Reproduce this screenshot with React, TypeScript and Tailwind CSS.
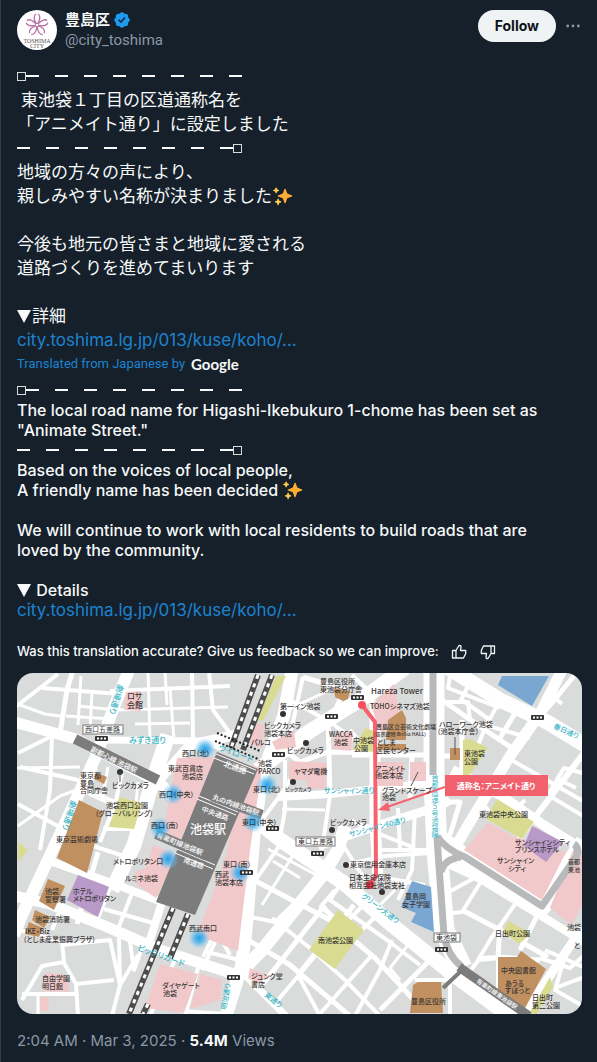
import React from "react";

const JP = '"Noto Sans CJK JP", sans-serif';

type Road = [string, number];

const roads: Road[] = [
  // main streets
  ["M14 722L76 739L160 783L175 800", 11],
  ["M129 670L112 712L96 756L62 830L22 915L14 935", 12],
  ["M105 740L205 741L222 748", 7],
  ["M168 735L150 790L134 845L112 890", 15],
  ["M150 790L190 745L235 735", 10],
  ["M50 861L117 885L162 902L150 940", 8],
  ["M14 896L50 904L105 926L160 950L240 976", 11],
  ["M292 670L284 715L262 775L254 835L246 930L241 968L226 1016", 13],
  ["M243 970L262 950L322 876L338 850L345 826", 13],
  ["M262 825L282 841L322 868L345 884L392 925L450 972L515 1020", 15],
  ["M258 770L310 731L368 695L405 668", 15],
  ["M442 664L500 700L547 722L590 748", 15],
  ["M318 846L370 828L440 806L450 800", 9],
  ["M278 797L330 794L440 782", 8],
  ["M375 700L375 820L378 880", 11],
  ["M434 670L434 780L437 850L444 930L462 968", 21],
  ["M563 668L541 712L510 756L470 822L443 868", 11],
  ["M452 770L500 795L545 826L590 854", 10],
  ["M437 837L458 853L542 906L585 842", 19],
  ["M444 862L482 880L548 920L590 946", 8],
  ["M582 928L555 968L520 1020", 9],
  ["M240 970L290 1020", 7],
  // side streets, north-west
  ["M14 708L58 674", 4], ["M20 705L45 714L60 716", 3], ["M42 688L120 694", 4], ["M73 670L67 690L60 733", 5],
  ["M81 676L78 725", 3], ["M92 692L90 730", 3], ["M78 706L116 710", 3], ["M66 716L112 719", 3],
  ["M110 691L230 686", 4], ["M115 710L228 707", 3], ["M148 670L150 740", 3], ["M165 672L167 705", 3],
  ["M170 688L174 740", 3], ["M192 672L193 738", 4], ["M209 672L213 710L235 740", 4], ["M135 724L190 723", 3],
  ["M52 735L50 790L40 850", 4], ["M18 753L52 736", 4], ["M14 768L80 767", 3], ["M20 767L78 780", 4],
  ["M18 804L72 834", 4], ["M18 826L60 796L82 788", 3], ["M96 768L88 790L124 806", 4], ["M108 767L102 800", 3],
  ["M122 773L115 805L100 842", 4], ["M80 790L108 803", 3], ["M138 782L134 828", 3], ["M103 829L145 829", 4],
  ["M90 845L130 858", 4], ["M98 852L84 900L77 924", 5],
  // side streets, south-west
  ["M110 888L98 918", 4], ["M132 893L116 934", 4], ["M104 909L153 923", 4], ["M62 905L52 930", 4],
  ["M20 930L62 942L64 962L42 966L22 1000", 4], ["M62 945L110 940L120 985L112 1016", 4],
  ["M64 963L76 984L114 980", 4], ["M76 984L78 1016", 4], ["M22 994L76 994", 4], ["M38 994L38 1016", 3],
  ["M119 938L120 982", 4], ["M130 942L134 970L142 948", 4], ["M120 985L138 955", 4], ["M175 960L150 1016", 4],
  ["M198 968L185 1016", 4], ["M180 1011L226 1014", 4],
  // around the station
  ["M203 957L216 930L230 955", 4], ["M207 952L244 961", 4], ["M216 940L202 970", 4],
  ["M250 878L330 920L375 958L425 1012", 5], ["M250 917L275 922L300 898", 4], ["M262 828L312 864", 3],
  ["M282 842L252 885", 4], ["M295 852L262 905", 3], ["M268 849L318 876", 3], ["M273 861L300 878", 3],
  ["M248 940L290 965L350 1016", 5], ["M272 918L310 948L345 980L380 1016", 4], ["M325 905L262 985", 5],
  ["M335 890L322 905L340 926L278 1000", 4], ["M354 905L298 975", 5], ["M298 975L320 1016", 4],
  ["M320 905L345 928", 5], ["M372 955L318 1016", 4], ["M340 885L330 900L387 940L420 965", 4],
  ["M382 910L362 930", 4], ["M372 896L345 924", 4],
  // north centre
  ["M303 677L345 690L330 720", 5], ["M290 700L330 722L355 740", 4], ["M303 677L290 735", 4],
  ["M330 690L282 712", 3], ["M352 675L370 692", 4], ["M284 750L300 762L328 752L375 753", 5],
  ["M328 720L330 795", 5], ["M300 762L284 790L262 820", 4], ["M285 760L285 810L280 838", 4],
  ["M330 795L322 850", 4], ["M282 809L325 810", 3], ["M350 730L375 760", 4], ["M352 755L430 755", 5],
  ["M340 840L365 880", 4], ["M350 820L382 835L415 848", 4], ["M345 865L385 856L430 853", 4],
  ["M378 850L430 850", 4], ["M415 810L412 870L398 900", 4], ["M398 808L400 850", 4],
  ["M385 878L425 885", 4], ["M395 890L380 905", 3], ["M412 755L410 800", 5],
  // north east
  ["M450 676L448 688L500 708", 4], ["M470 682L460 702", 4], ["M462 700L490 720", 4], ["M440 702L468 702L470 720", 4],
  ["M442 700L485 730L515 750", 5], ["M500 700L485 728L470 765", 4], ["M462 720L462 770", 5],
  ["M517 710L500 738", 5], ["M485 725L530 738", 4], ["M532 720L515 748", 4], ["M440 756L464 756", 5],
  ["M574 676L546 710", 5], ["M548 692L562 704", 4], ["M590 745L510 850", 6], ["M560 675L552 705", 3],
  ["M508 758L590 805", 4], ["M590 775L564 768L548 795L590 820", 4], ["M556 778L576 788", 4],
  ["M525 800L500 825", 4], ["M480 800L500 825", 4], ["M442 802L460 802L450 835", 5],
  // south east
  ["M482 880L462 912L445 914", 4], ["M447 893L478 876", 4], ["M518 900L490 940L478 960L500 958", 4],
  ["M462 910L500 930L548 957", 5], ["M540 910L520 950", 5], ["M500 925L498 957L540 960", 5],
  ["M498 960L498 1016", 4], ["M500 957L480 958L465 978", 4], ["M540 958L570 968L590 950", 4],
  ["M565 956L555 990L590 1010", 4], ["M555 988L590 975", 4], ["M545 950L590 970", 4],
  ["M392 940L380 970L355 1016", 4], ["M430 960L380 1010", 5], ["M408 945L390 968L400 980", 3],
  ["M415 980L450 980L450 1016", 4], ["M450 975L450 1016", 3],
];

type Area = [string, string];
const PINK = "#f2c9ca";
const BROWN = "#c09060";
const GREEN = "#d9dc90";
const PURPLE = "#b899c8";
const BLUE = "#7aa7d2";

const areas: Area[] = [
  ["126,692 140,691 141,711 124,710", PINK],
  ["177,758 215,757 196,806 180,840 163,833", PINK],
  ["153,845 178,855 156,898 137,885 135,872 146,868", PINK],
  ["255,722 264,725 262,748 250,744", PINK],
  ["248,765 262,768 250,850 238,951 197,935 222,870", PINK],
  ["289,761 327,763 325,789 307,788 307,780 289,780", PINK],
  ["272,742 294,730 296,747 276,750", PINK],
  ["336,733 353,731 351,751 333,749", PINK],
  ["371,705 394,684 400,716 382,734 376,720", PINK],
  ["378,762 404,762 403,786 378,786", PINK],
  ["410,762 426,762 426,781 410,781", PINK],
  ["488,822 512,836 566,852 542,900 464,850", PINK],
  ["575,845 582,850 582,905 572,925 550,908", PINK],
  ["160,964 198,974 184,1013 145,1008", PINK],
  ["201,974 222,980 220,1000 190,1009", PINK],
  ["250,968 268,976 257,984 248,978", PINK],
  ["46,972 68,976 69,992 44,991", PINK],
  ["40,997 49,997 48,1011 40,1011", PINK],
  ["79,800 103,812 87,873 57,858", BROWN],
  ["97,773 107,777 104,784 94,779", BROWN],
  ["48,879 65,886 54,910 39,901", BROWN],
  ["35,910 50,917 44,928 32,920", BROWN],
  ["29,922 43,928 39,937 25,934", BROWN],
  ["334,688 350,691 348,699 343,701 335,697", BROWN],
  ["388,720 402,710 406,718 406,740 386,740", BROWN],
  ["378,744 406,744 406,750 378,750", BROWN],
  ["450,748 460,748 460,760 450,760", BROWN],
  ["498,957 517,957 521,951 546,969 524,1010 498,994", BROWN],
  ["413,985 418,982 441,982 443,1013 410,1013", BROWN],
  ["120,797 142,803 134,829 109,827", GREEN],
  ["276,676 286,676 263,721 257,720", GREEN],
  ["365,728 374,731 374,752 353,750", GREEN],
  ["463,740 470,739 488,748 467,779 463,776", GREEN],
  ["497,799 534,822 522,839 486,819", GREEN],
  ["338,910 364,930 335,969 309,950", GREEN],
  ["509,921 531,934 519,944 502,932", GREEN],
  ["550,977 553,987 537,1014 529,1014", GREEN],
  ["18,842 28,850 18,862", GREEN],
  ["78,875 109,887 98,917 67,900", PURPLE],
  ["532,826 563,842 546,862 524,846", PURPLE],
  ["502,676 549,676 532,706 498,685", BLUE],
  ["412,881 431,887 434,932 411,922 416,913 401,907", BLUE],
];

type Label = { t: string; x: number; y: number; s?: number; c?: string; r?: number };
const TEAL = "#3ab4c4";

const labels: Label[] = [
  { t: "劇場通り", x: 118, y: 684, r: 107, c: TEAL },
  { t: "劇場通り", x: 71, y: 800, r: 107, c: TEAL },
  { t: "ロサ", x: 127, y: 699 },
  { t: "会館", x: 127, y: 708 },
  { t: "みずき通り", x: 129, y: 743, c: TEAL },
  { t: "東京都", x: 80, y: 778, s: 7 },
  { t: "豊島", x: 80, y: 786, s: 7 },
  { t: "合同庁舎", x: 80, y: 793, s: 7 },
  { t: "ビックカメラ", x: 112, y: 788, s: 7 },
  { t: "池袋西口公園", x: 106, y: 808, s: 7 },
  { t: "（グローバルリング）", x: 95, y: 816, s: 7 },
  { t: "東京芸術劇場", x: 56, y: 842, s: 7 },
  { t: "西口（北）", x: 182, y: 756, s: 7 },
  { t: "東武百貨店", x: 168, y: 771, s: 7 },
  { t: "池袋店", x: 182, y: 779, s: 7 },
  { t: "西口（中央）", x: 159, y: 797, s: 7 },
  { t: "西口（南）", x: 151, y: 828, s: 7 },
  { t: "メトロポリタン口", x: 113, y: 864, s: 7 },
  { t: "ルミネ池袋", x: 125, y: 881, s: 7 },
  { t: "池袋", x: 45, y: 894, s: 7 },
  { t: "警察署", x: 45, y: 902, s: 7 },
  { t: "ホテル", x: 73, y: 894, s: 7 },
  { t: "メトロポリタン", x: 73, y: 901, s: 7 },
  { t: "池袋消防署", x: 35, y: 922, s: 7 },
  { t: "IKE・Biz", x: 25, y: 934, s: 7 },
  { t: "（としま産業振興プラザ）", x: 23, y: 942, s: 7 },
  { t: "自由学園", x: 42, y: 981, s: 7 },
  { t: "明日館", x: 42, y: 989, s: 7 },
  { t: "ビックリガード", x: 137, y: 950, r: 20, c: TEAL },
  { t: "ダイヤゲート", x: 162, y: 988, s: 7 },
  { t: "池袋", x: 163, y: 996, s: 7 },
  { t: "西武南口", x: 189, y: 931, s: 7 },
  { t: "明治通り", x: 226, y: 1010, r: -80, c: TEAL, s: 7 },
  { t: "東通り", x: 264, y: 996, r: 38, c: TEAL, s: 7 },
  { t: "ジュンク堂", x: 251, y: 979, s: 7 },
  { t: "書店", x: 251, y: 987, s: 7 },
  { t: "豊島区役所", x: 320, y: 684, s: 7 },
  { t: "東池袋分庁舎", x: 320, y: 692, s: 7 },
  { t: "第一イン池袋", x: 280, y: 709, s: 7 },
  { t: "ビックカメラ", x: 264, y: 728, s: 7 },
  { t: "池袋本店", x: 264, y: 736, s: 7 },
  { t: "ビックカメラ", x: 287, y: 753, s: 7 },
  { t: "パルコ", x: 251, y: 745, s: 7 },
  { t: "池袋", x: 258, y: 766, s: 7 },
  { t: "PARCO", x: 258, y: 774, s: 7 },
  { t: "ヤマダ電機", x: 294, y: 774, s: 7 },
  { t: "ビックカメラ", x: 285, y: 791, s: 5 },
  { t: "東口（北）", x: 253, y: 792, s: 7 },
  { t: "東口（中央）", x: 242, y: 825, s: 7 },
  { t: "東口（南）", x: 223, y: 867, s: 7 },
  { t: "西武", x: 215, y: 877, s: 7 },
  { t: "池袋本店", x: 215, y: 885, s: 7 },
  { t: "サンシャイン通り", x: 324, y: 793, s: 7, c: TEAL },
  { t: "サンシャイン60通り", x: 350, y: 837, s: 7, c: TEAL, r: -15 },
  { t: "WACCA", x: 329, y: 737, s: 7 },
  { t: "池袋", x: 334, y: 745, s: 7 },
  { t: "中池袋", x: 353, y: 743, s: 7 },
  { t: "公園", x: 354, y: 751, s: 7 },
  { t: "Hareza Tower", x: 371, y: 694, s: 8 },
  { t: "TOHOシネマズ池袋", x: 370, y: 709, s: 7 },
  { t: "豊島区立芸術文化劇場", x: 376, y: 729, s: 6 },
  { t: "（東京建物 Brillia HALL）", x: 373, y: 736, s: 5 },
  { t: "としま", x: 377, y: 745, s: 7 },
  { t: "区民センター", x: 376, y: 753, s: 7 },
  { t: "アニメイト", x: 375, y: 771, s: 7 },
  { t: "池袋本店", x: 375, y: 778, s: 7 },
  { t: "グランドスケープ", x: 382, y: 793, s: 7 },
  { t: "池袋", x: 382, y: 800, s: 7 },
  { t: "ビックカメラ", x: 330, y: 825, s: 7 },
  { t: "東京信用金庫本店", x: 350, y: 867, s: 7 },
  { t: "日本生命保険", x: 349, y: 880, s: 7 },
  { t: "相互会社池袋支社", x: 349, y: 888, s: 7 },
  { t: "グリーン大通り", x: 361, y: 897, r: 37, c: TEAL, s: 7 },
  { t: "南池袋公園", x: 318, y: 943, s: 7 },
  { t: "ハローワーク池袋", x: 439, y: 727, s: 7 },
  { t: "（池袋本庁舎）", x: 437, y: 734, s: 7 },
  { t: "東池袋", x: 464, y: 756, s: 7 },
  { t: "公園", x: 464, y: 764, s: 7 },
  { t: "春日通り", x: 553, y: 728, r: 24, c: TEAL, s: 7 },
  { t: "東池袋中央公園", x: 479, y: 817, s: 7 },
  { t: "サンシャインシティ", x: 515, y: 845, s: 7 },
  { t: "プリンスホテル", x: 515, y: 852, s: 7 },
  { t: "サンシャイン", x: 497, y: 863, s: 7 },
  { t: "シティ", x: 508, y: 871, s: 7 },
  { t: "首都", x: 568, y: 864, s: 6 },
  { t: "東池", x: 568, y: 872, s: 6 },
  { t: "池袋", x: 567, y: 930, s: 7 },
  { t: "と", x: 574, y: 948, s: 7 },
  { t: "豊島岡", x: 405, y: 899, s: 7 },
  { t: "女子学園", x: 402, y: 907, s: 7 },
  { t: "日出町公園", x: 495, y: 936, s: 7 },
  { t: "中央図書館", x: 501, y: 973, s: 7 },
  { t: "あうる", x: 505, y: 986, s: 7 },
  { t: "すぽっと", x: 505, y: 993, s: 7 },
  { t: "日出町", x: 532, y: 1000, s: 7 },
  { t: "第二公園", x: 532, y: 1008, s: 7 },
  { t: "豊島区役所", x: 411, y: 1004, s: 7 },
  { t: "北通路", x: 223, y: 766, c: "#fff", r: 20 },
  { t: "中央通路", x: 201, y: 811, c: "#fff", r: 20, s: 7 },
  { t: "南通路", x: 183, y: 862, c: "#fff", r: 20, s: 7 },
  { t: "池袋駅", x: 190, y: 834, c: "#fff", s: 12 },
  { t: "ウイロード", x: 218, y: 750, c: TEAL, r: 20 },
];

const signals: [number, number][] = [
  [95, 736], [351, 695], [325, 714], [272, 752], [266, 826], [311, 851], [240, 870], [227, 975], [531, 715], [435, 947],
];
const dots: [number, number][] = [
  [120, 772], [283, 714], [306, 743], [293, 782], [332, 830], [346, 865], [382, 892],
];
const glows: [number, number][] = [
  [205, 749], [173, 794], [160, 828], [168, 859], [267, 785], [253, 822], [240, 873], [199, 938],
];

function StreetMap() {
  return (
    <svg viewBox="17 673 565 341" className="block w-full rounded-2xl" role="img" aria-label="池袋駅周辺の地図" fontFamily={JP}>
      <defs>
        <radialGradient id="glow">
          <stop offset="0" stopColor="#1e9fe8" />
          <stop offset="0.45" stopColor="#45b0ec" stopOpacity="0.75" />
          <stop offset="1" stopColor="#7cc9f2" stopOpacity="0" />
        </radialGradient>
      </defs>
      <rect x="17" y="673" width="565" height="341" fill="#dadcdc" />
      <g fill="none" stroke="#fff" strokeLinejoin="round">
        {roads.map(([d, w], i) => (
          <path key={i} d={d} strokeWidth={w} />
        ))}
      </g>
      {areas.map(([p, c], i) => (
        <polygon key={i} points={p} fill={c} />
      ))}
      {/* expressway */}
      <g fill="none" stroke="#b8b9ba" strokeWidth="7" strokeLinejoin="round">
        <path d="M433 673L433 775" />
        <path d="M437 838L440 880L444 935Q447 955 462 967" />
        <path d="M437 836Q445 849 465 857L542 906L576 857Q580 848 574 844" />
        <path d="M441 872Q444 859 461 857" />
      </g>
      {/* railway */}
      <g fill="none">
        <path d="M258 675L231 748M272 675L243 750" stroke="#4d4d4d" strokeWidth="6" />
        <path d="M258 675L231 748M272 675L243 750" stroke="#fff" strokeWidth="3" strokeDasharray="4 5" />
        <path d="M173 908L129 1014M188 914L170 958M148 1004L143 1014" stroke="#4d4d4d" strokeWidth="6" />
        <path d="M173 908L129 1014M188 914L170 958M148 1004L143 1014" stroke="#fff" strokeWidth="3" strokeDasharray="4 5" />
        <path d="M217 733L260 751M215 741L258 759" stroke="#222" strokeWidth="2" strokeDasharray="2 2" />
      </g>
      <polygon points="217,752 258,769 195,915 156,902" fill="#7c7c7c" />
      <g stroke="#fff" strokeWidth="1" fill="none">
        <path d="M216 754L256 770M214 758L254 774M199 796L238 812M197 799L236 815M177 849L215 865M175 853L213 869" />
      </g>
      <g stroke="#7c7c7c" strokeWidth="10" fill="none">
        <path d="M75 739L158 780" />
        <path d="M212 796L262 815" />
        <path d="M156 834L207 856" />
        <path d="M459 967L529 1016" strokeWidth="9" />
        <path d="M443 988L460 972" strokeWidth="4" />
      </g>
      <g fontSize="7" fontWeight="700" fill="#efefef">
        <text transform="translate(90 751) rotate(26)">副都心線 池袋駅</text>
        <text transform="translate(212 799) rotate(20)">丸の内線池袋駅</text>
        <text transform="translate(156 837) rotate(22)">有楽町線池袋駅</text>
        <text transform="translate(476 982) rotate(35)" fontSize="6">有楽町線東池袋駅</text>
      </g>
      {glows.map(([x, y], i) => (
        <circle key={i} cx={x} cy={y} r="11" fill="url(#glow)" />
      ))}
      {dots.map(([x, y], i) => (
        <circle key={i} cx={x} cy={y} r="3" fill="#333" />
      ))}
      <path d="M120 772V782M455 737V755M418 772L411 786" stroke="#555" strokeWidth="1" />
      {/* street name written down the expressway */}
      <g fontSize="7" fill={TEAL}>
        <text x="435" y="775" writingMode="vertical-rl">首都高速５号池袋線</text>
      </g>
      {/* the named street */}
      <g fill="none" stroke="#f4636f" strokeWidth="4">
        <path d="M362 705L375 722L376 876L370 884" />
        <path d="M445 787L384 808" strokeWidth="2" />
      </g>
      <circle cx="362" cy="705" r="4" fill="#f4505e" />
      <circle cx="370" cy="885" r="4" fill="#ee2f3c" />
      <polygon points="378,810 388,802 390,811" fill="#f4636f" />
      {labels.map((l, i) => (
        <text
          key={i}
          fontSize={l.s ?? 8}
          fontWeight={500}
          fill={l.c ?? "#3a3636"}
          transform={`translate(${l.x} ${l.y}) rotate(${l.r ?? 0})`}
          style={{ fontFeatureSettings: '"palt"' }}
        >
          {l.t}
        </text>
      ))}
      {signals.map(([x, y], i) => (
        <g key={i} transform={`translate(${x} ${y})`}>
          <rect width="13" height="5" rx="1" fill="#333" />
          <path d="M2 2.500h2M5.500 2.500h2M9 2.500h2" stroke="#fff" strokeWidth="2" />
        </g>
      ))}
      <g fontSize="7" fill="#333">
        <rect x="83" y="725" width="40" height="9" fill="#fff" stroke="#777" strokeWidth="1" />
        <text x="85" y="732">西口五差路</text>
        <rect x="296" y="837" width="39" height="9" fill="#fff" stroke="#777" strokeWidth="1" />
        <text x="298" y="844">東口五差路</text>
        <rect x="434" y="933" width="26" height="9" fill="#fff" stroke="#777" strokeWidth="1" />
        <text x="436" y="940">東池袋</text>
      </g>
      <rect x="445" y="775" width="103" height="21" fill="#f0606d" />
      <text x="496" y="789" fontSize="8" fontWeight="700" fill="#fff" textAnchor="middle" style={{ fontFeatureSettings: '"palt"' }}>
        通称名：アニメイト通り
      </text>
    </svg>
  );
}

function Sparkles() {
  return (
    <svg viewBox="0 0 36 36" className="mx-px inline-block size-5 align-[-4px]" role="img" aria-label="sparkles">
      <path fill="#FFAC33" d="M34.300 16.900l-8.500-3.200-3.200-8.500a1 1 0 0 0-1.900 0l-3.200 8.500-8.500 3.200a1 1 0 0 0 0 1.900l8.500 3.200 3.200 8.500a1 1 0 0 0 1.900 0l3.200-8.500 8.500-3.200a1 1 0 0 0 0-1.900z" />
      <path fill="#FFCC4D" d="M14.300 27.600l-3-1.200-1.100-3a1 1 0 0 0-2 0l-1.100 3-3 1.200a1 1 0 0 0 0 1.900l3 1.100 1.100 3a1 1 0 0 0 2 0l1.100-3 3-1.100a1 1 0 0 0 0-1.900zM10.300 7l-2.600-1L6.600 3.200a1 1 0 0 0-1.900 0L3.700 6 .9 7a1 1 0 0 0 0 1.900l2.800 1 1 2.800a1 1 0 0 0 1.900 0l1.100-2.700 2.600-1.100a1 1 0 0 0 0-1.900z" />
    </svg>
  );
}

function DashRule({ end = false, tall = false }: { end?: boolean; tall?: boolean }) {
  const box = <span className="mt-px size-[9px] border border-[#d9dbdc]" />;
  return (
    <div className={tall ? "flex h-6 items-center" : "flex h-5 items-center"}>
      {!end && box}
      <div className="flex gap-4">
        {Array.from({ length: 8 }, (_, i) => (
          <span key={i} className="h-[2px] w-[13px] bg-[#f7f9f9]" />
        ))}
      </div>
      {end && box}
    </div>
  );
}

function Triangle() {
  return (
    <svg viewBox="0 0 14 13" className="mr-px inline-block h-[13px] w-[14px] align-[-1px]" aria-hidden="true">
      <path d="M0 0H14L7 13Z" fill="#f7f9f9" />
    </svg>
  );
}

function Avatar() {
  return (
    <svg viewBox="0 0 40 40" className="size-10 shrink-0" role="img" aria-label="Toshima City">
      <circle cx="20" cy="20" r="20" fill="#fff" />
      <g fill="none" stroke="#b871a6" strokeWidth="1.300">
        {[0, 72, 144, 216, 288].map((a) => (
          <path key={a} transform={`rotate(${a} 20 15)`} d="M19.500 14C16 9 17 5 19 4M20.500 14C24 9 23 5 21 4" />
        ))}
      </g>
      <g fontSize="6" fill="#555" textAnchor="middle" fontFamily='"Liberation Serif", serif'>
        <text x="20" y="33">TOSHIMA</text>
        <text x="20" y="38">CITY</text>
      </g>
    </svg>
  );
}

function Thumb({ down = false }: { down?: boolean }) {
  return (
    <svg
      viewBox="0 0 16 16"
      className={down ? "size-4 rotate-180" : "size-4"}
      fill="none"
      stroke="#eff3f4"
      strokeWidth="1.300"
      strokeLinejoin="round"
      aria-hidden="true"
    >
      <path d="M5 6.500H1.500V14H5M5 6.500V14H12.500L14.700 9.500V6.500H9.500L10 2.800Q10 1.500 8.700 1.500H8Z" />
    </svg>
  );
}

function MoreIcon() {
  return (
    <svg viewBox="0 0 14 4" className="h-1 w-[14px]" fill="#8b98a5" aria-hidden="true">
      <circle cx="1.700" cy="2" r="1.400" />
      <circle cx="7" cy="2" r="1.400" />
      <circle cx="12.300" cy="2" r="1.400" />
    </svg>
  );
}

export default function App() {
  return (
    <article className="min-h-screen border-l border-[#2f3b46] bg-[#15202b] pt-[10px] pr-[15px] pb-3 pl-4 font-[Inter,'Noto_Sans_CJK_JP',sans-serif] text-[#f7f9f9]">
      <header className="flex items-start">
        <Avatar />
        <div className="ml-2 flex-1 text-[15px] leading-5">
          <div className="flex items-center gap-[3px]">
            <span className="font-bold">豊島区</span>
            <svg viewBox="0 0 24 24" className="size-[18px]" role="img" aria-label="Verified account">
              <path
                fill="#1d9bf0"
                d="M22.250 12c0-1.430-.88-2.670-2.190-3.340.46-1.390.2-2.900-.81-3.910s-2.520-1.270-3.910-.81c-.66-1.310-1.910-2.190-3.340-2.190s-2.670.88-3.330 2.190c-1.400-.46-2.910-.2-3.920.81s-1.260 2.520-.8 3.910c-1.310.67-2.200 1.910-2.200 3.340s.89 2.670 2.200 3.340c-.46 1.390-.21 2.900.8 3.910s2.520 1.260 3.910.81c.67 1.310 1.910 2.190 3.340 2.190s2.680-.88 3.340-2.190c1.390.45 2.900.2 3.910-.81s1.270-2.520.81-3.910c1.310-.67 2.190-1.910 2.190-3.340zm-11.710 4.200L6.800 12.460l1.410-1.420 2.260 2.260 4.800-5.230 1.470 1.360-6.200 6.770z"
              />
            </svg>
          </div>
          <div className="font-[Roboto,sans-serif] text-[#8b98a5]">@city_toshima</div>
        </div>
        <button type="button" className="h-8 rounded-full bg-[#eff3f4] px-[17px] text-sm font-bold text-[#0f1419]">
          Follow
        </button>
        <button type="button" aria-label="More" className="ml-[10px] mr-[2px] flex h-8 items-center">
          <MoreIcon />
        </button>
      </header>

      <div className="mt-[14px] text-[17px] leading-6" lang="ja">
        <DashRule tall />
        <p className="pl-1">東池袋１丁目の区道通称名を</p>
        <p>「アニメイト通り」に設定しました</p>
        <DashRule tall end />
        <p>地域の方々の声により、</p>
        <p>
          親しみやすい名称が決まりました
          <Sparkles />
        </p>
        <p className="mt-6">今後も地元の皆さまと地域に愛される</p>
        <p>道路づくりを進めてまいります</p>
        <p className="mt-6">
          <Triangle />
          詳細
        </p>
        <p>
          <a href="#koho" className="text-[#1d83cf]">city.toshima.lg.jp/013/kuse/koho/…</a>
        </p>
      </div>

      <p className="flex h-7 items-center gap-1.5 pb-1 font-[Roboto,sans-serif] text-[13px] text-[#1d83cf]">
        Translated from Japanese by
        <span className="font-[Lato,sans-serif] text-[15px] font-bold text-[#f7f9f9]">Google</span>
      </p>

      <div className="pr-6 text-base leading-5 font-medium" lang="en">
        <DashRule />
        <p>The local road name for Higashi-Ikebukuro 1-chome has been set as "Animate Street."</p>
        <DashRule end />
        <p>Based on the voices of local people,</p>
        <p>
          A friendly name has been decided <Sparkles />
        </p>
        <p className="mt-5">We will continue to work with local residents to build roads that are loved by the community.</p>
        <p className="mt-5">
          <Triangle /> Details
        </p>
        <p>
          <a href="#koho" className="text-[17px] font-normal text-[#1d83cf]">city.toshima.lg.jp/013/kuse/koho/…</a>
        </p>
      </div>

      <div className="mt-[22px] flex h-5 items-center text-[13px] font-medium">
        <span>Was this translation accurate? Give us feedback so we can improve:</span>
        <button type="button" aria-label="Accurate" className="ml-3">
          <Thumb />
        </button>
        <button type="button" aria-label="Not accurate" className="ml-[13px]">
          <Thumb down />
        </button>
      </div>

      <div className="mt-[11px]">
        <StreetMap />
      </div>

      <footer className="mt-[17px] text-[15px] leading-5 text-[#8b98a5]">
        2:04 AM · Mar 3, 2025 · <strong className="font-bold text-[#f7f9f9]">5.4M</strong> Views
      </footer>
    </article>
  );
}
